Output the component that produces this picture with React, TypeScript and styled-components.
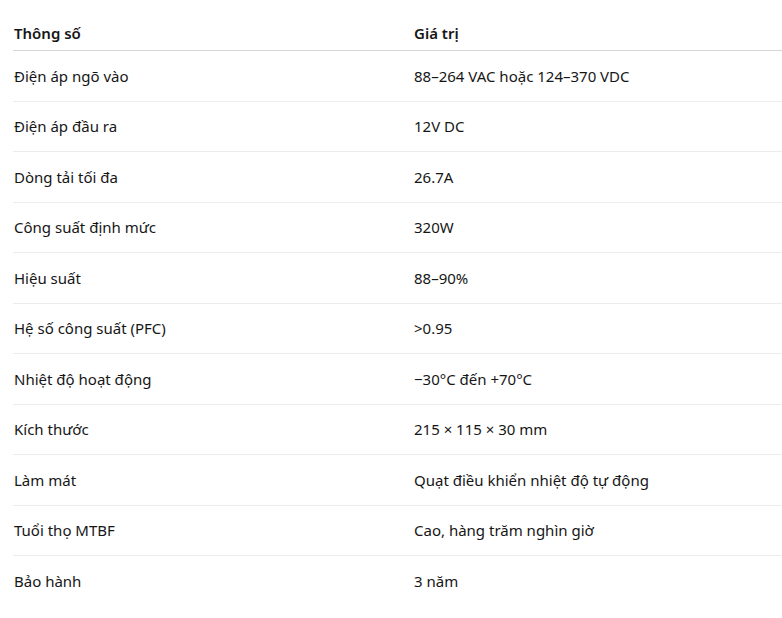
import React from "react";
import styled, { createGlobalStyle } from "styled-components";

const Global = createGlobalStyle`
  html, body { margin: 0; padding: 0; background: #ffffff; overflow: hidden; }
  body { font-family: "Noto Sans", "Open Sans", sans-serif; color: #161616; }
`;

const Page = styled.div`
  padding-left: 13px;
  width: 769px;
`;

const Table = styled.div`
  display: grid;
  grid-template-columns: 400px 1fr;
  font-size: 15px;
`;

const HeadCell = styled.div`
  font-weight: 600;
  line-height: 24px;
  padding: 21px 0 5px 1px;
  border-bottom: 1px solid #d6d6d6;
`;

const Cell = styled.div<{ $last?: boolean }>`
  line-height: 24px;
  height: 24px;
  padding: 12.75px 0 12.75px 1px;
  border-bottom: 1px solid ${(p) => (p.$last ? "transparent" : "#ececec")};
`;

const rows: [string, string][] = [
  ["Điện áp ngõ vào", "88–264 VAC hoặc 124–370 VDC"],
  ["Điện áp đầu ra", "12V DC"],
  ["Dòng tải tối đa", "26.7A"],
  ["Công suất định mức", "320W"],
  ["Hiệu suất", "88–90%"],
  ["Hệ số công suất (PFC)", ">0.95"],
  ["Nhiệt độ hoạt động", "−30°C đến +70°C"],
  ["Kích thước", "215 × 115 × 30 mm"],
  ["Làm mát", "Quạt điều khiển nhiệt độ tự động"],
  ["Tuổi thọ MTBF", "Cao, hàng trăm nghìn giờ"],
  ["Bảo hành", "3 năm"],
];

export default function App() {
  return (
    <>
      <Global />
      <Page>
        <Table>
          <HeadCell>Thông số</HeadCell>
          <HeadCell>Giá trị</HeadCell>
          {rows.map(([k, v], i) => (
            <React.Fragment key={k}>
              <Cell $last={i === rows.length - 1}>{k}</Cell>
              <Cell $last={i === rows.length - 1}>{v}</Cell>
            </React.Fragment>
          ))}
        </Table>
      </Page>
    </>
  );
}
